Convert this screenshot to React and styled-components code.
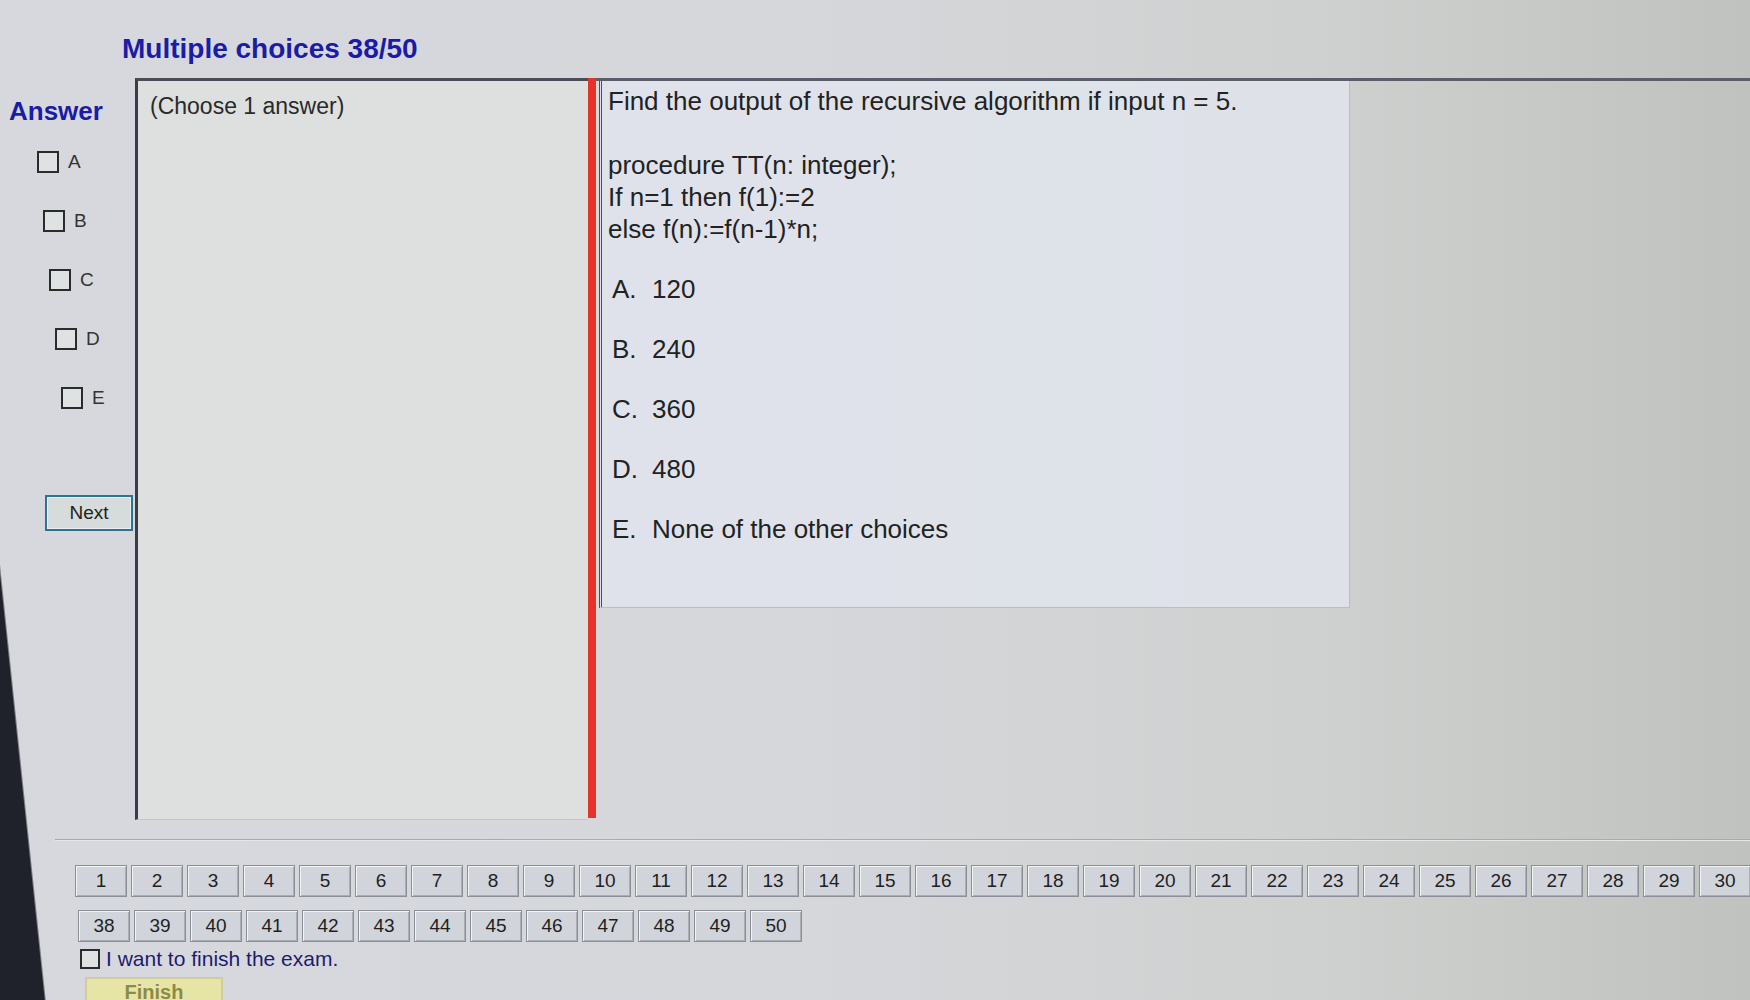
import React from 'react';
import styled, { createGlobalStyle } from 'styled-components';

const Global = createGlobalStyle`
  html, body { margin: 0; padding: 0; }
  body { font-family: "Liberation Sans", Arial, sans-serif; overflow: hidden; }
  * { box-sizing: border-box; }
`;

const Page = styled.div`
  width: 1750px;
  height: 1000px;
  overflow: hidden;
  display: flex;
  flex-direction: column;
  background:
    linear-gradient(84deg, #1f222a 44px, rgba(0, 0, 0, 0) 46px),
    linear-gradient(90deg, #d7d8de 0%, #d5d7db 45%, #cfd1d0 75%, #c0c2bf 100%);

  & > * {
    flex: none;
  }
`;

const Header = styled.div`
  height: 78px;
  display: flex;
  align-items: flex-end;
  padding: 0 0 14px 122px;
`;

const Title = styled.h1`
  margin: 0;
  font-size: 28px;
  line-height: 30px;
  font-weight: bold;
  color: #1b1ca6;
`;

const Main = styled.div`
  height: 742px;
  display: grid;
  grid-template-columns: 135px 453px 8px 1fr;
`;

const Sidebar = styled.div`
  padding-top: 18px;
  display: flex;
  flex-direction: column;
`;

const AnswerLabel = styled.div`
  padding-left: 9px;
  font-size: 26px;
  line-height: 30px;
  font-weight: bold;
  color: #1b1ca6;
`;

const OptionList = styled.div`
  margin-top: 21px;
  display: flex;
  flex-direction: column;
  gap: 29px;
`;

const OptionRow = styled.label`
  height: 30px;
  display: flex;
  align-items: center;
  gap: 9px;
  padding-left: ${(p) => 37 + p.$shift}px;
  font-size: 19px;
  color: #333;
`;

const Box = styled.span`
  width: ${(p) => p.$size}px;
  height: ${(p) => p.$size}px;
  border: 2px solid #2b2b2b;
  background: #dfe2e3;
  flex: none;
`;

const NextButton = styled.button`
  margin: 82px 0 0 45px;
  width: 88px;
  height: 36px;
  border: 2px solid #2f7390;
  box-shadow: inset 0 0 0 1px #e9eff0;
  background: #d6dbdb;
  font-family: inherit;
  font-size: 19px;
  color: #222;
  padding: 0;
`;

const ChoosePanel = styled.div`
  border-left: 3px solid #3a3c46;
  border-top: 3px solid #4a4c58;
  border-bottom: 1px solid #c2c6c8;
  background: rgba(222, 226, 223, 0.85);
  padding: 11px 0 0 12px;
  font-size: 23px;
  line-height: 28px;
  color: #2a2a2a;
`;

const RedBar = styled.div`
  background: #e5322b;
  margin-bottom: 2px;
`;

const QuestionArea = styled.div`
  border-top: 3px solid #5b5d6b;
  padding-left: 3px;
  display: flex;
  flex-direction: column;
`;

const QuestionBox = styled.div`
  width: 751px;
  height: 527px;
  border-left: 3px double #4c4e58;
  border-right: 1px solid #b9bdc6;
  border-bottom: 1px solid #b9bdc6;
  background: rgba(224, 228, 236, 0.85);
  padding: 4px 0 0 6px;
  font-size: 26px;
  line-height: 32px;
  color: #222;
`;

const Line = styled.div`
  min-height: 32px;
  white-space: pre;
`;

const Choice = styled.div`
  margin-top: 28px;
  padding-left: 4px;
  display: flex;
`;

const ChoiceKey = styled.span`
  width: 40px;
  flex: none;
`;

const Rule = styled.div`
  height: 1px;
  margin: 19px 0 0 55px;
  background: #a7abb0;
  box-shadow: 0 1px 0 #e4e6e8;
`;

const Nav = styled.div`
  margin-top: 25px;
  padding-left: 75px;
  display: flex;
  flex-direction: column;
  gap: 13px;
`;

const NavRow = styled.div`
  display: flex;
  gap: 4px;
  padding-left: ${(p) => p.$offset}px;
`;

const NavButton = styled.button`
  flex: none;
  width: 52px;
  height: 32px;
  padding: 0;
  border: 1px solid #8b8f98;
  box-shadow: inset 1px 1px 0 #f2f3f5, inset -1px -1px 0 #a9adb4;
  background: #d1d4da;
  font-family: inherit;
  font-size: 19px;
  color: #1f1f1f;
  display: flex;
  align-items: center;
  justify-content: center;
`;

const FinishRow = styled.label`
  margin: 5px 0 0 80px;
  height: 24px;
  display: flex;
  align-items: center;
  gap: 6px;
  font-size: 21px;
  color: #1c1c70;
`;

const FinishButton = styled.button`
  margin: 6px 0 0 85px;
  width: 138px;
  height: 36px;
  background: #e7e5a6;
  border: 2px solid #cfcd9a;
  font-family: inherit;
  font-size: 20px;
  font-weight: bold;
  color: #8c8b45;
  padding: 2px 0 0 0;
  display: flex;
  align-items: flex-start;
  justify-content: center;
`;

const letters = ['A', 'B', 'C', 'D', 'E'];
const choices = [
  ['A.', '120'],
  ['B.', '240'],
  ['C.', '360'],
  ['D.', '480'],
  ['E.', 'None of the other choices'],
];
const row1 = Array.from({ length: 37 }, (_, i) => i + 1);
const row2 = Array.from({ length: 13 }, (_, i) => i + 38);

export default function App() {
  return (
    <>
      <Global />
      <Page>
        <Header>
          <Title>Multiple choices 38/50</Title>
        </Header>
        <Main>
          <Sidebar>
            <AnswerLabel>Answer</AnswerLabel>
            <OptionList>
              {letters.map((l, i) => (
                <OptionRow key={l} $shift={i * 6}>
                  <Box $size={22} />
                  {l}
                </OptionRow>
              ))}
            </OptionList>
            <NextButton>Next</NextButton>
          </Sidebar>
          <ChoosePanel>(Choose 1 answer)</ChoosePanel>
          <RedBar />
          <QuestionArea>
            <QuestionBox>
              <Line>Find the output of the recursive algorithm if input n = 5.</Line>
              <Line> </Line>
              <Line>procedure TT(n: integer);</Line>
              <Line>If n=1 then f(1):=2</Line>
              <Line>else f(n):=f(n-1)*n;</Line>
              {choices.map(([k, v]) => (
                <Choice key={k}>
                  <ChoiceKey>{k}</ChoiceKey>
                  {v}
                </Choice>
              ))}
            </QuestionBox>
          </QuestionArea>
        </Main>
        <Rule />
        <Nav>
          <NavRow $offset={0}>
            {row1.map((n) => (
              <NavButton key={n}>{n}</NavButton>
            ))}
          </NavRow>
          <NavRow $offset={3}>
            {row2.map((n) => (
              <NavButton key={n}>{n}</NavButton>
            ))}
          </NavRow>
        </Nav>
        <FinishRow>
          <Box $size={20} />
          I want to finish the exam.
        </FinishRow>
        <FinishButton>Finish</FinishButton>
      </Page>
    </>
  );
}
